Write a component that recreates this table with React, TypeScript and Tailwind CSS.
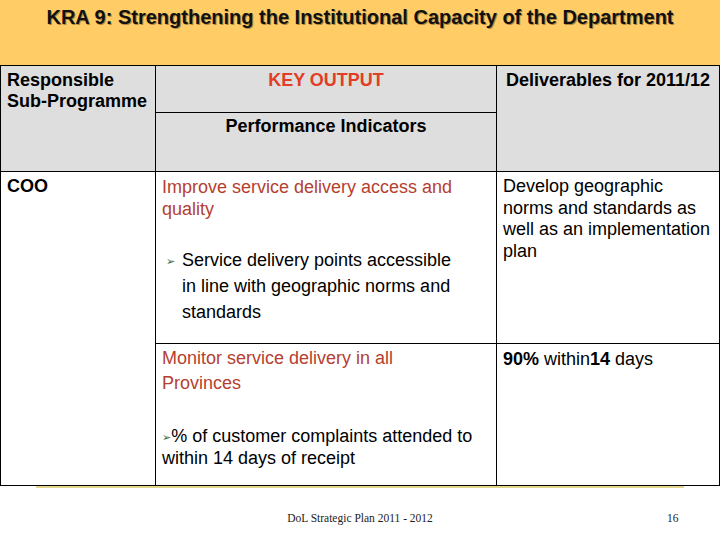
import React from 'react';

// KRA slide: orange title band, 3-column table, footer
const sans = "font-['Liberation_Sans',Arial,sans-serif]";

const Bullet = () => (
  <span className="inline-block align-[1px] font-['DejaVu_Sans',sans-serif] text-[11px] text-[#2f5f3a] leading-none">➢</span>
);

const App = () => {
  return (
    <div className={`w-[720px] h-[540px] bg-white overflow-hidden text-black ${sans}`}>
      {/* Title band */}
      <div className="h-[65px] bg-[#ffcc66] pt-[5px] text-center">
        <h1 className="text-[20px] leading-[24px] font-bold text-[#111] [text-shadow:1px_1px_0_#b08a40]">
          KRA 9: Strengthening the Institutional Capacity of the Department
        </h1>
      </div>

      {/* Table */}
      <div className="grid grid-cols-[155px_341px_223px] grid-rows-[47px_59px_172px_142px] border-l border-t border-black w-[720px]">
        <div className="row-span-2 bg-[#dedede] border-r border-b border-black pl-[6px] pt-[4px] text-[18px] leading-[21px] font-bold">
          Responsible
          <br />
          Sub-Programme
        </div>
        <div className="bg-[#dedede] border-r border-b border-black pt-[4px] text-center text-[18px] leading-[21px] font-bold text-[#e23d26]">
          KEY OUTPUT
        </div>
        <div className="row-span-2 bg-[#dedede] border-r border-b border-black pl-[9px] pt-[4px] text-[18px] leading-[21px] font-bold">
          Deliverables for 2011/12
        </div>
        <div className="bg-[#dedede] border-r border-b border-black pt-[3px] text-center text-[18px] leading-[21px] font-bold">
          Performance Indicators
        </div>

        <div className="row-span-2 border-r border-b border-black pl-[6px] pt-[4px] text-[18px] leading-[21px] font-bold">
          COO
        </div>
        <div className="border-r border-b border-black pl-[6px] pt-[4px] text-[18px]">
          <p className="leading-[22px] text-[#b5402f]">
            Improve service delivery access and
            <br />
            quality
          </p>
          <div className="flex mt-[27px] leading-[26px]">
            <span className="w-[20px] shrink-0 pl-[4px]">
              <Bullet />
            </span>
            <span>
              Service delivery points accessible
              <br />
              in line with geographic norms and
              <br />
              standards
            </span>
          </div>
        </div>
        <div className="border-r border-b border-black pl-[6px] pt-[4px] text-[18px] leading-[21.5px]">
          Develop geographic
          <br />
          norms and standards as
          <br />
          well as an implementation
          <br />
          plan
        </div>

        <div className="border-r border-b border-black pl-[6px] pt-[2px] text-[18px]">
          <p className="leading-[25px] text-[#b5402f]">
            Monitor service delivery in all
            <br />
            Provinces
          </p>
          <p className="mt-[29px] leading-[22px]">
            <Bullet />% of customer complaints attended to
            <br />
            within 14 days of receipt
          </p>
        </div>
        <div className="border-r border-b border-black pl-[6px] pt-[4px] text-[18px] leading-[22px]">
          <b>90%</b> within<b>14</b> days
        </div>
      </div>

      {/* Slide rule under table */}
      <div className="ml-[36px] w-[648px] h-[3px] border-t-2 border-[#e2d58c]" />

      {/* Footer */}
      <div className="relative mt-[21px] h-[16px] font-['Liberation_Serif',serif] text-[11.5px] text-[#222]">
        <div className="text-center">DoL Strategic Plan 2011 - 2012</div>
        <div className="absolute left-[667px] top-0">16</div>
      </div>
    </div>
  );
};

export default App;
